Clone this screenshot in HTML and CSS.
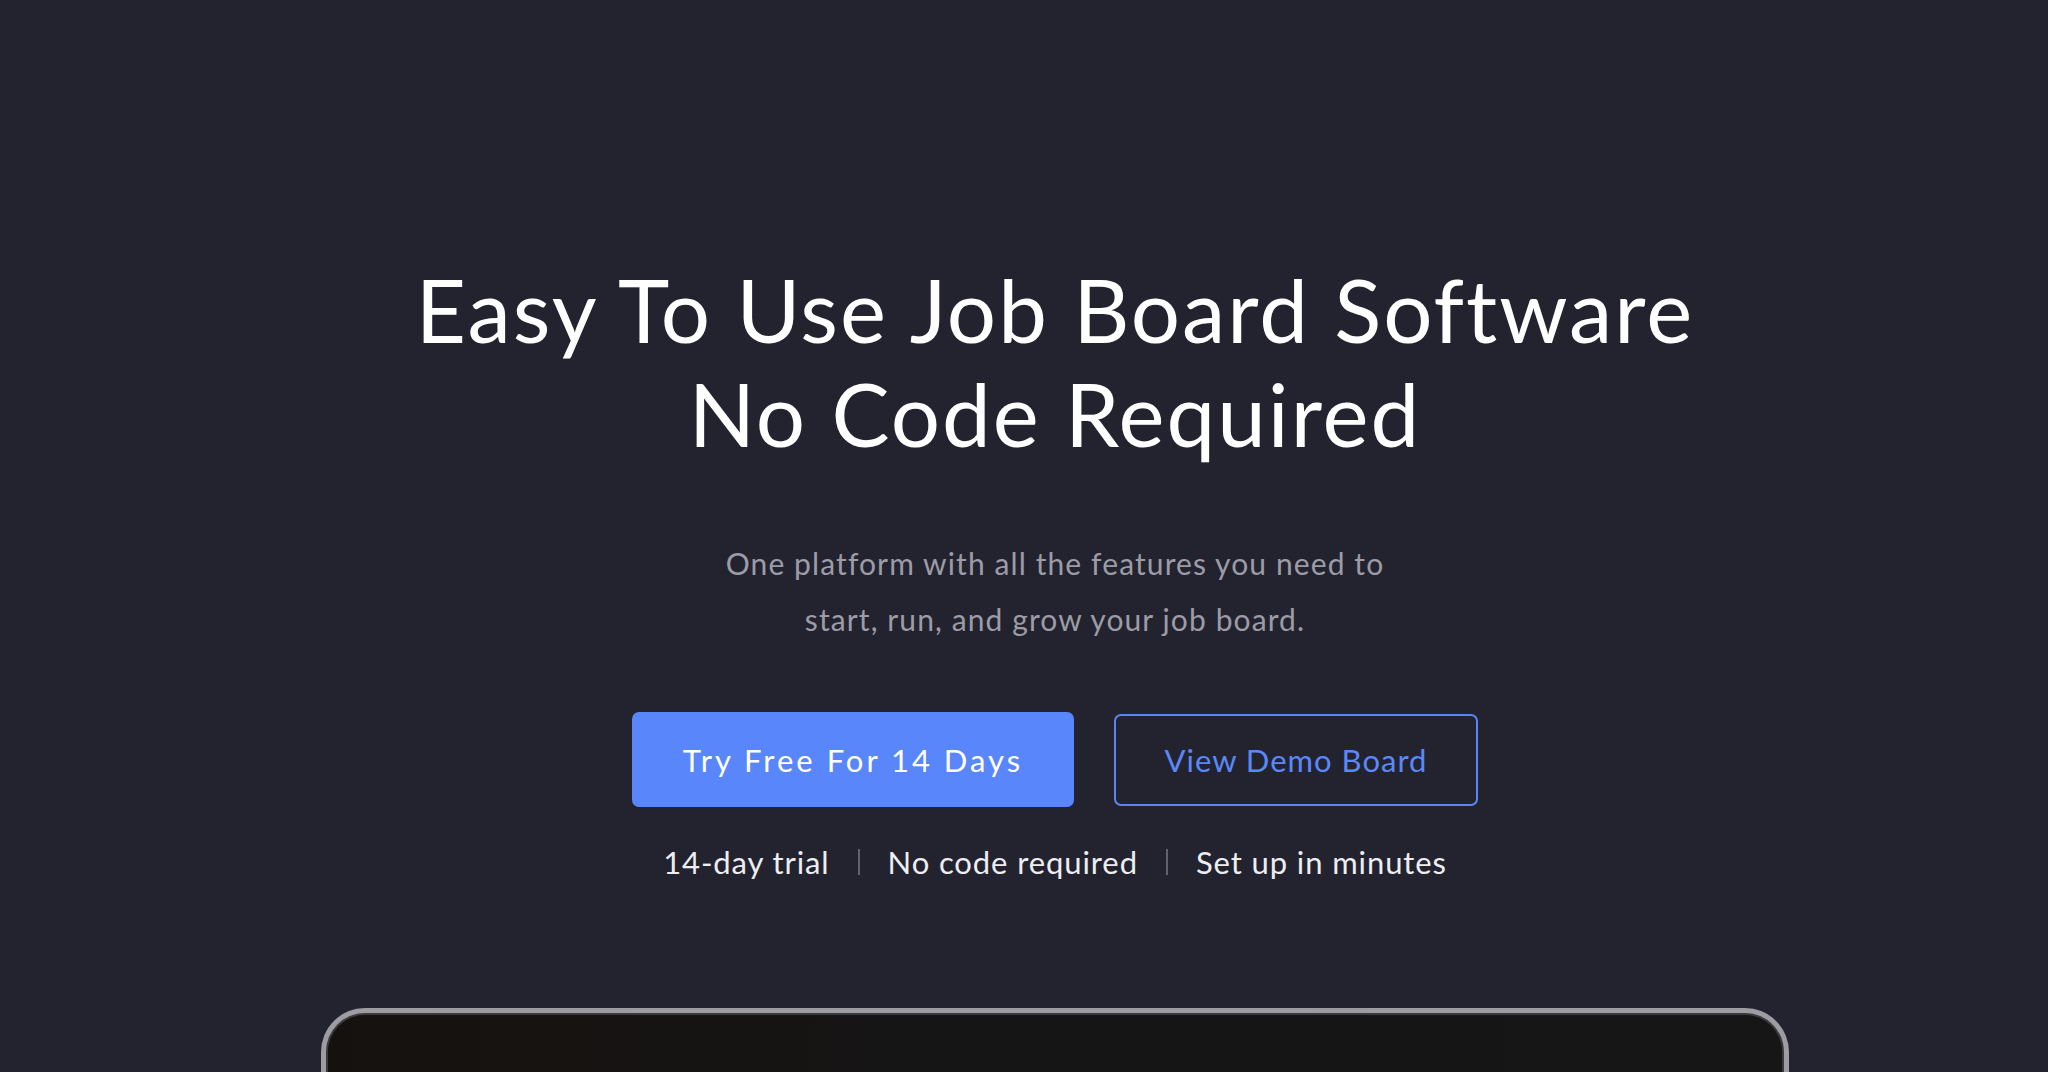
FILE: index.html
```html
<!DOCTYPE html>
<html lang="en">
<head>
<meta charset="utf-8">
<title>Job Board Software</title>
<link rel="stylesheet" href="styles.css">
</head>
<body>
<main class="hero">
  <h1 class="hero-title">Easy To Use Job Board Software<br>No Code Required</h1>
  <p class="hero-sub">One platform with all the features you need to<br>start, run, and grow your job board.</p>
  <div class="hero-actions">
    <a class="btn btn-primary" href="#">Try Free For 14 Days</a>
    <a class="btn btn-outline" href="#">View Demo Board</a>
  </div>
  <ul class="hero-points">
    <li>14-day trial</li>
    <li class="sep" aria-hidden="true"></li>
    <li>No code required</li>
    <li class="sep" aria-hidden="true"></li>
    <li>Set up in minutes</li>
  </ul>
  <div class="device">
    <div class="device-screen"></div>
  </div>
</main>
</body>
</html>
```

FILE: styles.css
```css
html, body {
  margin: 0;
  padding: 0;
  height: 100%;
  overflow: hidden;
}
body {
  background: #232330;
  font-family: Lato, "Noto Sans", sans-serif;
  color: #ffffff;
}
.hero {
  display: flex;
  flex-direction: column;
  align-items: center;
  padding: 258px 0 0 62px;
}
.hero-title {
  margin: 0;
  font-weight: 400;
  font-size: 87px;
  line-height: 104px;
  letter-spacing: 2px;
  text-align: center;
  color: #ffffff;
}
.hero-sub {
  margin: 69px 0 0;
  font-size: 30px;
  line-height: 56px;
  letter-spacing: 1.1px;
  text-align: center;
  color: #9d9ca6;
}
.hero-actions {
  margin-top: 65px;
  display: flex;
  align-items: center;
  gap: 40px;
}
.btn {
  display: flex;
  align-items: center;
  justify-content: center;
  box-sizing: border-box;
  text-decoration: none;
  font-size: 31px;
  border-radius: 7px;
}
.btn-primary {
  width: 442px;
  height: 95px;
  background: #5987fb;
  color: #ffffff;
  letter-spacing: 3px;
}
.btn-outline {
  width: 364px;
  height: 92px;
  border: 2px solid #5a86f4;
  color: #5b88f8;
  letter-spacing: 1px;
}
.hero-points {
  margin: 37px 0 0;
  padding: 0;
  list-style: none;
  display: flex;
  align-items: center;
  gap: 28px;
  font-size: 31px;
  line-height: 36px;
  letter-spacing: 0.9px;
  color: #eeeef2;
}
.hero-points .sep {
  width: 2px;
  height: 26px;
  background: #62626c;
}
.device {
  margin-top: 128px;
  width: 1468px;
  height: 64px;
  box-sizing: border-box;
  border: 5px solid #9d9ca3;
  border-bottom: none;
  border-radius: 44px 44px 0 0;
  background: #151515;
  box-shadow: inset 0 0 0 2px #3a3a3c;
  padding: 2px 2px 0;
}
.device-screen {
  height: 100%;
  border-radius: 38px 38px 0 0;
  background: linear-gradient(90deg, #15110e 0%, #161515 40%, #161616 100%);
}
```
